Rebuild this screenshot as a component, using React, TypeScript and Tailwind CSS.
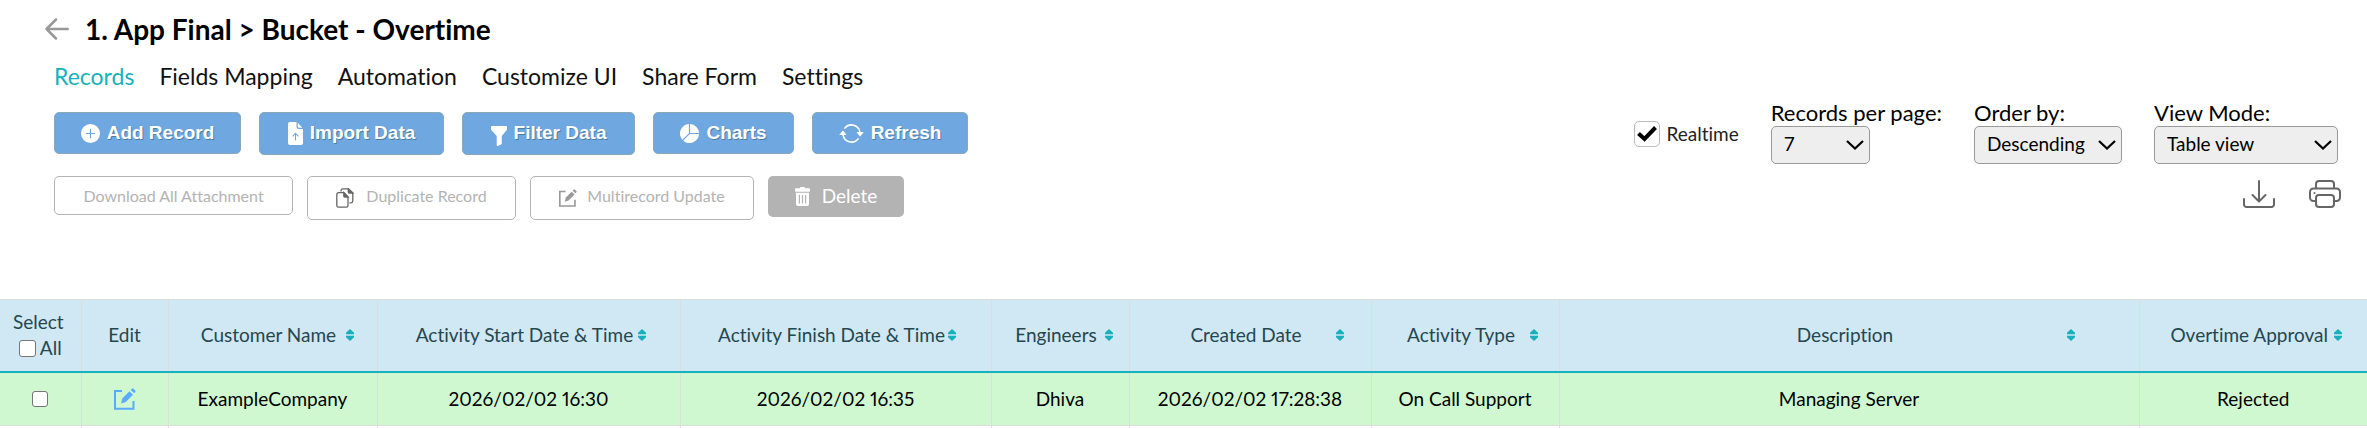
import React, { useState } from 'react';
import { BsArrowRepeat, BsPieChartFill, BsPlusCircleFill } from 'react-icons/bs';

const tabs = ['Records', 'Fields Mapping', 'Automation', 'Customize UI', 'Share Form', 'Settings'];

const columns = [
  { label: 'Customer Name', value: 'ExampleCompany', width: 'w-[209px]' },
  { label: 'Activity Start Date & Time', value: '2026/02/02 16:30', width: 'w-[303px]' },
  { label: 'Activity Finish Date & Time', value: '2026/02/02 16:35', width: 'w-[311px]' },
  { label: 'Engineers', value: 'Dhiva', width: 'w-[138px]' },
  { label: 'Created Date', value: '2026/02/02 17:28:38', width: 'w-[242px]' },
  { label: 'Activity Type', value: 'On Call Support', width: 'w-[188px]' },
  { label: 'Description', value: 'Managing Server', width: '' },
  { label: 'Overtime Approval', value: 'Rejected', width: 'w-[228px]' },
];

const BackIcon = () => (
  <svg viewBox="0 0 24 22" className="w-6 h-[22px]" fill="none" stroke="currentColor" strokeWidth="2.500" strokeLinecap="round" strokeLinejoin="round">
    <path d="M22.700 11H1.500M11 1.500L1.500 11l9.500 9.500" />
  </svg>
);

const ImportIcon = () => (
  <svg viewBox="0 0 15 23" className="w-[15px] h-[23px]" fill="currentColor">
    <path
      fillRule="evenodd"
      d="M2 0H8.500V4.500a2.500 2.500 0 0 0 2.500 2.500H15V21a2 2 0 0 1-2 2H2a2 2 0 0 1-2-2V2a2 2 0 0 1 2-2zM7 18.500H8V12.600l2 2.200.8-.8L7.500 10.400 4.200 14l.8.8 2-2.200z"
    />
    <path d="M9.800.8L14.300 5.800H11a1.200 1.200 0 0 1-1.200-1.200z" />
  </svg>
);

const FunnelIcon = () => (
  <svg viewBox="0 0 16 20" className="w-4 h-5 mt-1" fill="currentColor">
    <path d="M.8 0h14.400c.5 0 .8.4.8.8v2.400c0 .3-.1.5-.3.7L10.800 10v7.600c0 .4-.2.7-.6.9l-3.600 1.400c-.5.2-.9-.1-.9-.6V10L.3 3.900A1 1 0 0 1 0 3.200V.8C0 .4.3 0 .8 0z" />
  </svg>
);

const TrashIcon = () => (
  <svg viewBox="0 0 15 19" className="w-[15px] h-[19px]" fill="currentColor">
    <path d="M0 2.200a1 1 0 0 1 1-1H5V1a1 1 0 0 1 1-1H9a1 1 0 0 1 1 1v.2h4a1 1 0 0 1 1 1V4a.8.8 0 0 1-.8.8H.8A.8.8 0 0 1 0 4z" />
    <path
      fillRule="evenodd"
      d="M1 5.800H14V17a2 2 0 0 1-2 2H3a2 2 0 0 1-2-2zM3.800 8V16.500H5V8zM6.900 8V16.500H8.100V8zM10 8V16.500H11.200V8z"
    />
  </svg>
);

const EditIcon = ({ className }: { className: string }) => (
  <svg viewBox="0 0 22 22" className={className} fill="none">
    <path d="M8 3H1V20.800H19.500V13" stroke="currentColor" strokeWidth="2" />
    <path d="M7 15.500l1.300-5L15.500 3.300l3.500 3.500-7.300 7.300z" fill="currentColor" />
    <path d="M16.700 2L18.200.5q.5-.5 1 0l2.200 2.200q.5.500 0 1L20.200 5.200z" fill="currentColor" />
  </svg>
);

const DuplicateIcon = () => (
  <svg viewBox="0 0 18 20" className="w-[18px] h-5 text-[#666]" fill="none" stroke="currentColor" strokeWidth="1.300">
    <path d="M5 3.500V2.500A1.800 1.800 0 0 1 6.800.8H12.500L16.800 5V13a1.800 1.800 0 0 1-1.800 1.800h-1.500" />
    <path d="M12.300.8V4a1 1 0 0 0 1 1h3.500z" fill="currentColor" />
    <path d="M2.500 4.700H8L12 9v8.500a1.700 1.700 0 0 1-1.700 1.700H2.500A1.700 1.700 0 0 1 .8 17.500V6.400A1.700 1.700 0 0 1 2.500 4.700z" />
    <path d="M7.800 4.700V8a1 1 0 0 0 1 1H12z" fill="currentColor" />
  </svg>
);

const DownloadIcon = () => (
  <svg viewBox="0 0 32 28" className="w-8 h-7" fill="none" stroke="currentColor" strokeWidth="2" strokeLinecap="round" strokeLinejoin="round">
    <path d="M16 1v20M9.500 15l6.500 6.500 6.500-6.500M1 19v5.500A2.500 2.500 0 0 0 3.500 27h25a2.500 2.500 0 0 0 2.500-2.500V19" />
  </svg>
);

const PrintIcon = () => (
  <svg viewBox="0 0 32 28" className="w-8 h-7" fill="none" stroke="currentColor" strokeWidth="2">
    <path d="M7 8.500V4a3 3 0 0 1 3-3h12a3 3 0 0 1 3 3v4.500" />
    <path d="M7 21H4.500A3.500 3.500 0 0 1 1 17.500V12a3.500 3.500 0 0 1 3.500-3.500h23A3.500 3.500 0 0 1 31 12v5.500a3.500 3.500 0 0 1-3.500 3.500H25" />
    <rect x="7" y="15" width="18" height="12" rx="3" />
    <circle cx="5.500" cy="13" r="1" fill="currentColor" stroke="none" />
  </svg>
);

const SortIcon = () => (
  <svg viewBox="0 0 8 12" className="w-2 h-3 shrink-0 text-[#17b1bd]" fill="currentColor">
    <path d="M4 0L8 3.800V5.300H0V3.800zM4 12L0 8.200V6.700H8V8.200z" />
  </svg>
);

const ActionButton = ({ icon, label, className = '' }: { icon: React.ReactNode; label: string; className?: string }) => (
  <button
    type="button"
    className={`flex items-center justify-center gap-[7px] rounded-[5px] border border-[#8ba9b5] bg-[#6fa7e0] font-['Liberation_Sans',sans-serif] text-[19px] font-bold text-white [text-shadow:1px_1px_0_#4b7f9f] ${className}`}
  >
    {icon}
    {label}
  </button>
);

interface SelectFieldProps {
  id: string;
  label: string;
  options: string[];
  className: string;
}

const SelectField = ({ id, label, options, className }: SelectFieldProps) => (
  <div className="flex flex-col items-start">
    <label htmlFor={id} className="text-[22px] leading-[26px] text-black whitespace-nowrap">
      {label}
    </label>
    <div className="grid items-center">
      <select
        id={id}
        className={`col-start-1 row-start-1 h-[38px] appearance-none rounded-[5px] border border-[#999] bg-[#eee] pl-3 pb-0.5 text-[19px] text-black ${className}`}
      >
        {options.map((option) => (
          <option key={option}>{option}</option>
        ))}
      </select>
      <svg viewBox="0 0 18 10" className="col-start-1 row-start-1 w-[18px] h-2.5 mr-1.5 justify-self-end pointer-events-none" fill="none" stroke="#000" strokeWidth="2.200">
        <path d="M1 1l8 7.500L17 1" />
      </svg>
    </div>
  </div>
);

const App: React.FC = () => {
  const [realtime, setRealtime] = useState(true);

  return (
    <div className="bg-white text-black font-['Lato',sans-serif] [font-variant-ligatures:none]">
      <header className="flex items-center gap-4 pl-[45px] pt-[11px]">
        <a href="#back" aria-label="Back" className="text-[#999]">
          <BackIcon />
        </a>
        <h1 className="text-[28px] leading-9 font-bold">1. App Final &gt; Bucket - Overtime</h1>
      </header>

      <nav className="flex gap-[25px] pl-[54px] pt-[13px]">
        {tabs.map((tab, i) => (
          <a key={tab} href="#tab" className={`text-[23px] leading-8 ${i === 0 ? 'text-[#17b1bd]' : 'text-[#111]'}`}>
            {tab}
          </a>
        ))}
      </nav>

      <section className="flex justify-between pl-[54px] pr-[26px]">
        <div className="pt-5">
          <div className="flex items-start gap-[18px]">
            <ActionButton icon={<BsPlusCircleFill className="w-[19px] h-[19px]" />} label="Add Record" className="w-[187px] h-[42px]" />
            <ActionButton icon={<ImportIcon />} label="Import Data" className="w-[185px] h-[43px]" />
            <ActionButton icon={<FunnelIcon />} label="Filter Data" className="w-[173px] h-[43px]" />
            <ActionButton icon={<BsPieChartFill className="w-[19px] h-[19px]" />} label="Charts" className="w-[141px] h-[42px]" />
            <ActionButton icon={<BsArrowRepeat className="w-[25px] h-[25px]" />} label="Refresh" className="w-[156px] h-[42px]" />
          </div>

          <div className="flex items-start gap-3.5 pt-[21px] text-[#b3b3b3]">
            <button type="button" disabled className="w-[239px] h-[39px] rounded-[5px] border border-[#b3b3b3] text-base">
              Download All Attachment
            </button>
            <button type="button" disabled className="flex items-center justify-center gap-3 w-[209px] h-11 rounded-[5px] border border-[#b3b3b3] text-base">
              <DuplicateIcon />
              <span className="pb-1">Duplicate Record</span>
            </button>
            <button type="button" disabled className="flex items-center justify-center gap-2.5 w-[224px] h-11 rounded-[5px] border border-[#b3b3b3] text-base">
              <EditIcon className="w-[18px] h-[18px] text-[#999]" />
              <span className="pb-1">Multirecord Update</span>
            </button>
            <button type="button" disabled className="flex items-center justify-center gap-3 w-[136px] h-[41px] rounded-[5px] bg-[#b3b3b3] text-white text-[19px]">
              <TrashIcon />
              Delete
            </button>
          </div>
        </div>

        <div className="flex flex-col items-end pt-2">
          <div className="flex items-start gap-8 pr-[3px]">
            <label className="flex items-center gap-1.5 pt-[21px] text-[19px] leading-[26px] text-[#222]">
              <span className="grid place-items-center">
                <input
                  type="checkbox"
                  checked={realtime}
                  onChange={(e) => setRealtime(e.target.checked)}
                  className="peer col-start-1 row-start-1 w-[26px] h-[26px] appearance-none rounded-[5px] border border-[#bbb] bg-white"
                />
                <svg viewBox="0 0 20 16" className="col-start-1 row-start-1 w-5 h-4 hidden peer-checked:block pointer-events-none" fill="none" stroke="#000" strokeWidth="4">
                  <path d="M1.500 7.500L7.500 13 18.500 1.500" />
                </svg>
              </span>
              Realtime
            </label>
            <SelectField id="per-page" label="Records per page:" options={['7', '10', '25', '50']} className="w-[99px]" />
            <SelectField id="order-by" label="Order by:" options={['Descending', 'Ascending']} className="w-[148px]" />
            <SelectField id="view-mode" label="View Mode:" options={['Table view', 'Card view']} className="w-[184px]" />
          </div>
          <div className="flex gap-[34px] pt-4 text-[#666]">
            <button type="button" aria-label="Download">
              <DownloadIcon />
            </button>
            <button type="button" aria-label="Print">
              <PrintIcon />
            </button>
          </div>
        </div>
      </section>

      <table className="mt-[79px] w-full table-fixed border-collapse text-center text-[19px] leading-[26px] proportional-nums">
        <thead>
          <tr className="h-[72px] border-t border-[#ddd] bg-[#d0e8f3] text-[#24474f]">
            <th className="w-[81px] border-r border-[#ddd] font-normal">
              <label className="block">
                <span className="block pr-1">Select</span>
                <span className="flex items-center justify-center gap-1">
                  <input type="checkbox" className="w-[17px] h-[17px] appearance-none rounded-[3px] border border-[#767676] bg-white" />
                  All
                </span>
              </label>
            </th>
            <th className="w-[87px] border-r border-[#ddd] font-normal">Edit</th>
            {columns.map((col) => (
              <th key={col.label} className={`${col.width} border-r border-[#ddd] last:border-r-0 font-normal`}>
                <div className="flex items-center px-[11%] whitespace-nowrap">
                  <span className="flex-1">{col.label}</span>
                  <SortIcon />
                </div>
              </th>
            ))}
          </tr>
        </thead>
        <tbody>
          <tr className="h-[54px] border-t-2 border-b border-t-[#17b1bd] border-b-[#ddd] bg-[#d0f8d0]">
            <td className="border-r border-[#ddd]">
              <input type="checkbox" aria-label="Select record" className="block mx-auto w-4 h-4 appearance-none rounded-[3px] border border-[#767676] bg-white" />
            </td>
            <td className="border-r border-[#ddd]">
              <button type="button" aria-label="Edit record" className="block mx-auto text-[#5aabff]">
                <EditIcon className="w-[22px] h-[22px]" />
              </button>
            </td>
            {columns.map((col) => (
              <td key={col.label} className="border-r border-[#ddd] last:border-r-0">
                {col.value}
              </td>
            ))}
          </tr>
          {/* next row peeks in under the first record */}
          <tr className="h-[3px]">
            <td className="border-r border-[#ddd]" />
            <td className="border-r border-[#ddd]" />
            {columns.map((col) => (
              <td key={col.label} className="border-r border-[#ddd] last:border-r-0" />
            ))}
          </tr>
        </tbody>
      </table>
    </div>
  );
};

export default App;
